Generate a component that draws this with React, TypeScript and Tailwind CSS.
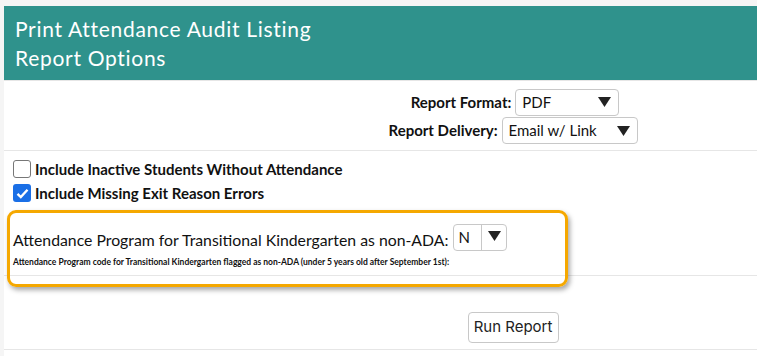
import React from "react";

function Arrow() {
  return (
    <svg width="13" height="10" viewBox="0 0 13 10" className="shrink-0">
      <path d="M0 0 L13 0 L6.5 10 Z" fill="#222" />
    </svg>
  );
}

function FakeSelect({ value, width }: { value: string; width: string }) {
  return (
    <div
      className={`${width} h-[27px] border border-[#c8c8c8] rounded-[4px] bg-white flex items-center justify-between pl-[6px] pr-[7px] text-[15px] font-normal text-[#111]`}
    >
      <span>{value}</span>
      <Arrow />
    </div>
  );
}

function Check({ checked }: { checked?: boolean }) {
  return checked ? (
    <span className="w-[18px] h-[18px] rounded-[3px] bg-[#1a6fe6] flex items-center justify-center shrink-0">
      <svg width="13" height="11" viewBox="0 0 13 11">
        <path d="M1.5 5.8 L4.8 9 L11.5 1.8" stroke="white" strokeWidth="2.4" fill="none" />
      </svg>
    </span>
  ) : (
    <span className="w-[18px] h-[18px] rounded-[3px] border border-[#777] bg-white shrink-0" />
  );
}

export default function App() {
  return (
    <div
      className="min-h-screen bg-[#f5f5f5] pl-[4px] pt-[6px] text-[#111]"
      style={{ fontFamily: "Lato, 'Noto Sans', sans-serif" }}
    >
      <div className="bg-white relative">
        <div className="bg-[#2f928c] h-[74px] px-[11px] pt-[8px] text-white text-[21px] leading-[29px] tracking-[0.7px]">
          <div>Print Attendance Audit Listing</div>
          <div>Report Options</div>
        </div>

        <div className="border-t border-[#e6e6e6] h-[70px] flex">
          <div className="ml-auto w-[488px] flex flex-col items-center pt-[7px] font-bold text-[15px]">
            <div className="flex items-center gap-[4px] h-[28px] pl-[4px]">
              <span>Report Format:</span>
              <FakeSelect value="PDF" width="w-[104px]" />
            </div>
            <div className="flex items-center gap-[4px] h-[29px]">
              <span>Report Delivery:</span>
              <FakeSelect value="Email w/ Link" width="w-[136px]" />
            </div>
          </div>
        </div>

        <div className="border-t border-[#e6e6e6] h-[125px] px-[9px] pt-[9px] text-[15px] font-bold">
          <div className="flex items-center gap-[4px] h-[18px]">
            <Check />
            <span>Include Inactive Students Without Attendance</span>
          </div>
          <div className="flex items-center gap-[4px] h-[18px] mt-[6px]">
            <Check checked />
            <span>Include Missing Exit Reason Errors</span>
          </div>
          <div className="mt-[22px]">
            <div className="flex items-end gap-[5px]">
              <span className="text-[15.8px] font-normal leading-[20px] mb-[1px]">
                Attendance Program for Transitional Kindergarten as non-ADA:
              </span>
              <div className="w-[54px] h-[27px] border border-[#c8c8c8] rounded-[4px] flex text-[15px] font-normal">
                <span className="w-[28px] border-r border-[#c8c8c8] pl-[4px] leading-[24px]">N</span>
                <span className="flex-1 flex items-start justify-center pt-[6px]">
                  <Arrow />
                </span>
              </div>
            </div>
            <div className="text-[8.5px] font-bold mt-[6px] leading-[11px]">
              Attendance Program code for Transitional Kindergarten flagged as non-ADA (under 5 years old after September 1st):
            </div>
          </div>
        </div>

        <div className="border-t border-[#e6e6e6] h-[74px] flex">
          <div className="ml-auto w-[488px] flex justify-center pt-[36px]">
            <button
              className="w-[91px] h-[31px] border border-[#c8c8c8] rounded-[4px] bg-white text-[15px] text-[#222]"
              style={{ fontFamily: "Inter, sans-serif" }}
            >
              Run Report
            </button>
          </div>
        </div>
        <div className="border-t border-[#e6e6e6] h-[10px]" />

        <div className="absolute left-[3px] top-[204px] w-[561px] h-[77px] border-[3px] border-[#f5a800] rounded-[9px] shadow-[2px_3px_5px_rgba(0,0,0,0.35)] pointer-events-none" />
      </div>
    </div>
  );
}
